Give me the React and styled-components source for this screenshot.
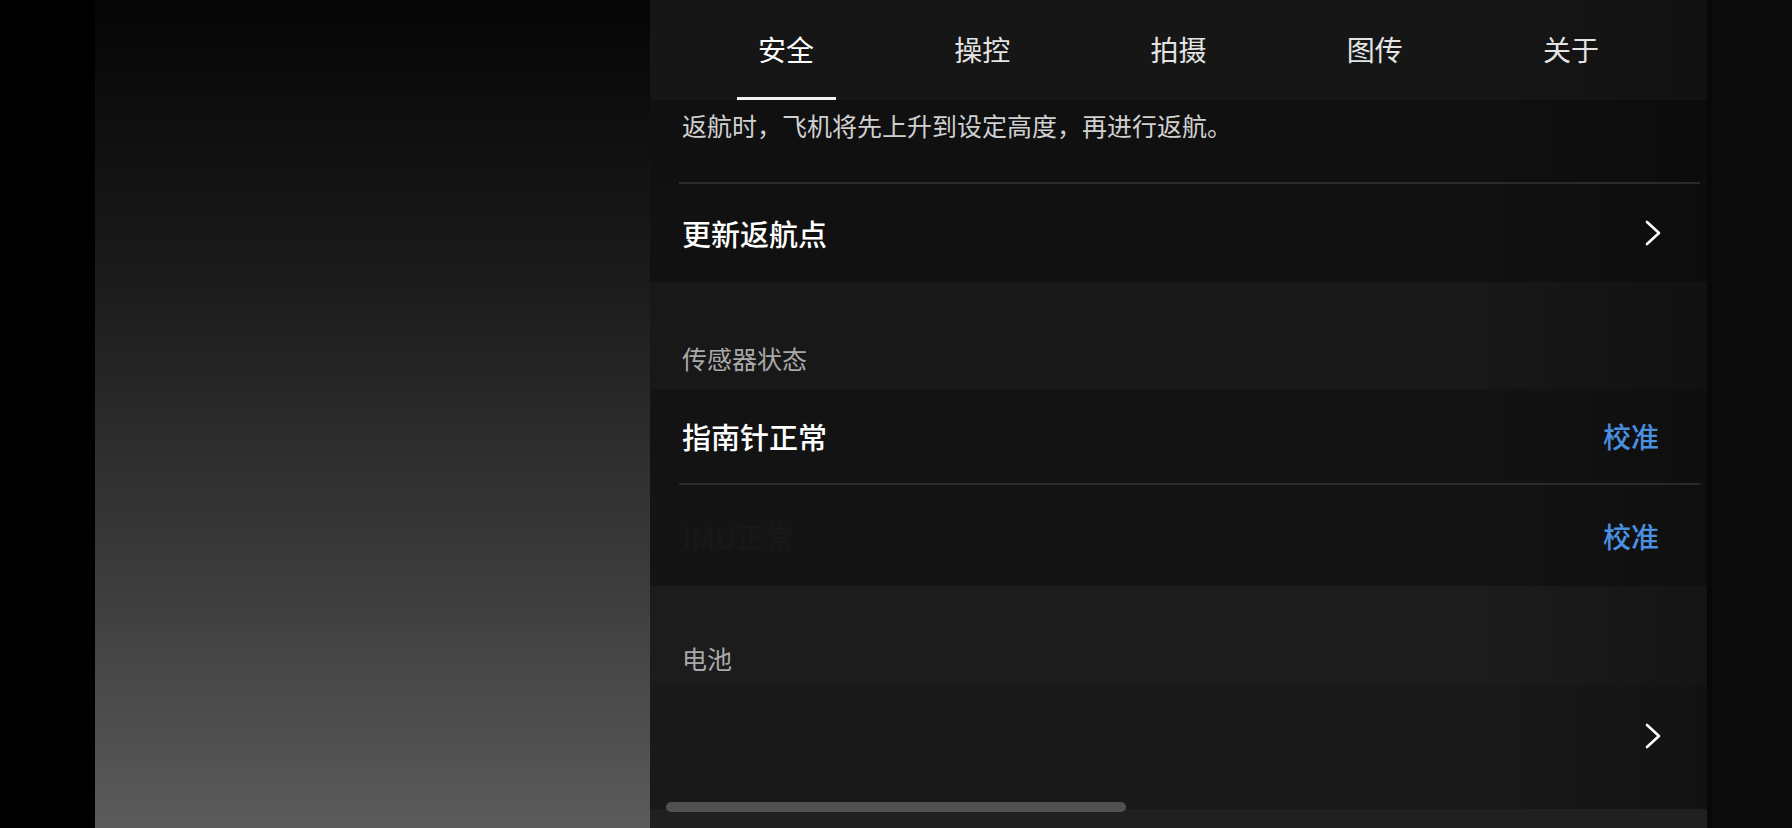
import styled, { createGlobalStyle } from 'styled-components'

const GlobalStyle = createGlobalStyle`
  html, body {
    margin: 0;
    padding: 0;
    background: #000;
    overflow: hidden;
  }
  body {
    font-family: "Noto Sans CJK SC", "Noto Sans", sans-serif;
  }
`

const Screen = styled.div`
  display: flex;
  width: 1792px;
  height: 828px;
  background: #000;
`

const Bezel = styled.div`
  width: 95px;
  flex-shrink: 0;
  background: #000;
`

const Preview = styled.div`
  width: 555px;
  flex-shrink: 0;
  background: linear-gradient(180deg, #050505 0%, #1c1c1c 35%, #3a3a3a 68%, #5b5b5b 100%);
`

const Panel = styled.div`
  position: relative;
  display: flex;
  flex-direction: column;
  width: 1057px;
  flex-shrink: 0;
  overflow: hidden;
  background: #202020;
`

const Edge = styled.div`
  flex: 1;
  background: #0c0c0c;
  border-left: 5px solid #080808;
`

const TabBar = styled.div`
  display: flex;
  height: 100px;
  flex-shrink: 0;
  padding: 0 38px;
  background: linear-gradient(90deg, transparent 80%, rgba(0, 0, 0, 0.2)), #161616;
`

const Tab = styled.div`
  position: relative;
  flex: 1;
  display: flex;
  align-items: center;
  justify-content: center;
  padding-bottom: 2px;
  font-size: 28px;
  color: ${p => (p.$active ? '#ffffff' : '#e4e4e4')};

  &::after {
    content: '';
    display: ${p => (p.$active ? 'block' : 'none')};
    position: absolute;
    bottom: 0;
    left: 50%;
    width: 99px;
    height: 3px;
    margin-left: -49px;
    background: #f4f4f4;
  }
`

const Block = styled.div`
  display: flex;
  flex-shrink: 0;
  height: ${p => p.$h}px;
  box-sizing: border-box;
  padding: 0 45px 0 32px;
  background: linear-gradient(90deg, transparent 78%, rgba(0, 0, 0, 0.28)), ${p => p.$bg};
`

const Note = styled(Block)`
  align-items: flex-start;
  padding-top: 8px;
  font-size: 25px;
  line-height: 35px;
  color: #d0d0d0;
`

// hairline inset from the left edge, row colour shows on both sides
const Divider = styled.div`
  flex-shrink: 0;
  height: 2px;
  background: linear-gradient(
    90deg,
    ${p => p.$bg} 29px,
    #2a2a2a 29px,
    #2a2a2a calc(100% - 7px),
    ${p => p.$bg} calc(100% - 7px)
  );
`

const Row = styled(Block)`
  align-items: center;
  justify-content: space-between;
  padding-bottom: ${p => p.$tail || 0}px;
`

const RowTitle = styled.div`
  font-size: 29px;
  font-weight: 500;
  color: ${p => (p.$dim ? '#181818' : '#ffffff')};
`

const Action = styled.div`
  font-size: 28px;
  font-weight: 500;
  color: #4a8fe0;
  margin-right: 3px;
`

const Chevron = styled.svg`
  width: 18px;
  height: 28px;
`

const SectionHead = styled(Block)`
  align-items: flex-end;
  padding-bottom: ${p => p.$pb}px;
  font-size: 25px;
  line-height: 35px;
  color: #a9a9a9;
`

const ScrollThumb = styled.div`
  position: absolute;
  left: 16px;
  bottom: 16px;
  width: 460px;
  height: 10px;
  border-radius: 5px;
  background: #505050;
`

const tabs = ['安全', '操控', '拍摄', '图传', '关于']

function Arrow() {
  return (
    <Chevron viewBox="0 0 18 28">
      <polyline
        points="3,3 15,14 3,25"
        fill="none"
        stroke="#ffffff"
        strokeWidth="2.6"
        strokeLinecap="round"
        strokeLinejoin="round"
      />
    </Chevron>
  )
}

function App() {
  return (
    <>
      <GlobalStyle />
      <Screen>
        <Bezel />
        <Preview />
        <Panel>
          <TabBar>
            {tabs.map((t, i) => (
              <Tab key={t} $active={i === 0}>{t}</Tab>
            ))}
          </TabBar>

          <Note $h={82} $bg="#101010">返航时，飞机将先上升到设定高度，再进行返航。</Note>
          <Divider $bg="#101010" />
          <Row $h={98} $bg="#111111">
            <RowTitle>更新返航点</RowTitle>
            <Arrow />
          </Row>

          <SectionHead $h={107} $pb={13} $bg="#181818">传感器状态</SectionHead>
          <Row $h={94} $bg="#131313">
            <RowTitle>指南针正常</RowTitle>
            <Action>校准</Action>
          </Row>
          <Divider $bg="#131313" />
          <Row $h={101} $bg="#141414">
            <RowTitle $dim>IMU正常</RowTitle>
            <Action>校准</Action>
          </Row>

          <SectionHead $h={100} $pb={10} $bg="#1c1c1c">电池</SectionHead>
          <Row $h={123} $tail={23} $bg="#191919">
            <RowTitle $dim>电池信息</RowTitle>
            <Arrow />
          </Row>

          <ScrollThumb />
        </Panel>
        <Edge />
      </Screen>
    </>
  )
}

export default App
